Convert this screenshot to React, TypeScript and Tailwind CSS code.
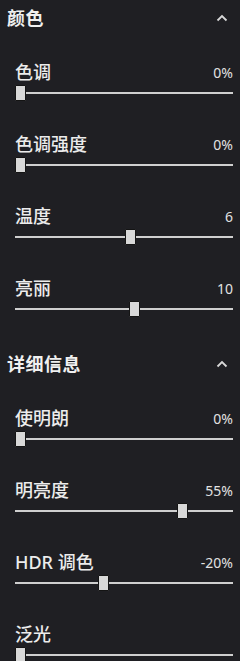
import React from 'react'

type Slider = { label: string; value: string; frac: number }

const color: Slider[] = [
  { label: '色调', value: '0%', frac: 0 },
  { label: '色调强度', value: '0%', frac: 0 },
  { label: '温度', value: '6', frac: 0.53 },
  { label: '亮丽', value: '10', frac: 0.55 },
]

const detail: Slider[] = [
  { label: '使明朗', value: '0%', frac: 0 },
  { label: '明亮度', value: '55%', frac: 0.785 },
  { label: 'HDR 调色', value: '-20%', frac: 0.4 },
  { label: '泛光', value: '', frac: 0 },
]

function Chevron() {
  return (
    <svg width="12" height="8" viewBox="0 0 12 8" className="text-[#d8d8d8]">
      <polyline points="1.5,6.5 6,2 10.5,6.5" fill="none" stroke="currentColor" strokeWidth="1.8" />
    </svg>
  )
}

function Header({ title }: { title: string }) {
  return (
    <div className="flex h-[36px] items-center justify-between pl-[7px] pr-[12px]">
      <span className="text-[18px] font-bold tracking-[0.5px] text-[#f0f0f0]">{title}</span>
      <Chevron />
    </div>
  )
}

function Row({ s }: { s: Slider }) {
  return (
    <div className="h-[72px] pl-[15px] pr-[7px] pt-[26px]">
      <div className="flex h-[20px] items-center justify-between">
        <span className="text-[18px] font-medium text-[#ececec]">{s.label}</span>
        <span className="font-['Noto_Sans','Noto_Sans_CJK_SC',sans-serif] text-[14px] text-[#e2e2e2]">{s.value}</span>
      </div>
      <div className="relative mt-[3px] flex h-[16px] items-center">
        <div className="h-[2px] w-full bg-[#cfcfcf]" />
        <div
          className="absolute top-0 h-[16px] w-[11px] rounded-[1px] border border-[#141414] bg-[#d8d8d8]"
          style={{ left: `${s.frac * 207}px` }}
        />
      </div>
    </div>
  )
}

export default function App() {
  return (
    <div className="h-[661px] w-[240px] overflow-hidden bg-[#1f1f23] font-['Noto_Sans','Noto_Sans_CJK_SC',sans-serif]">
      <Header title="颜色" />
      {color.map((s) => (
        <Row key={s.label} s={s} />
      ))}
      <div className="mt-[22px]">
        <Header title="详细信息" />
        {detail.map((s) => (
          <Row key={s.label} s={s} />
        ))}
      </div>
    </div>
  )
}
